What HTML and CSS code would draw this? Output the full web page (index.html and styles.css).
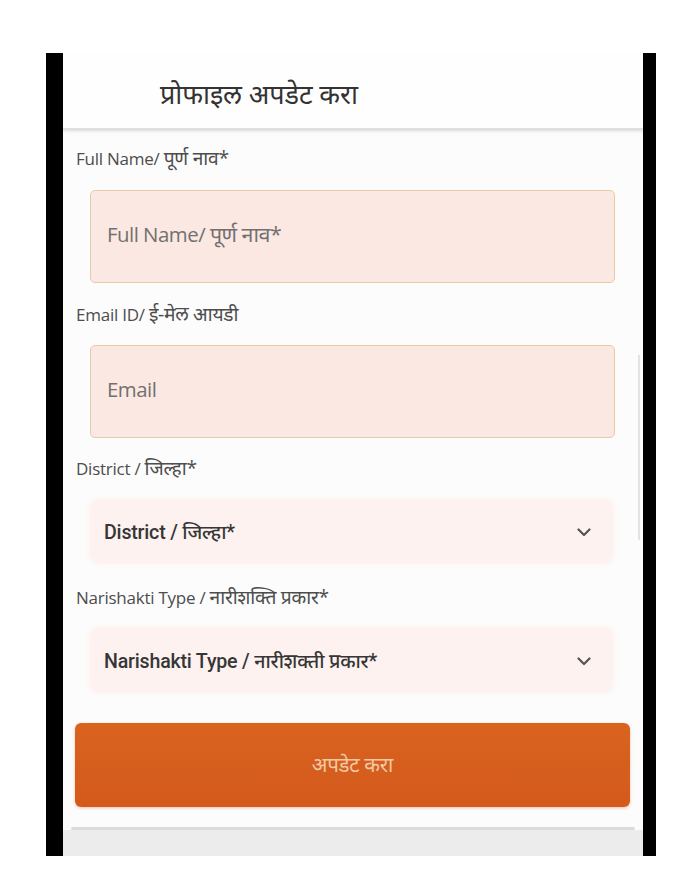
FILE: index.html
```html
<!DOCTYPE html>
<html lang="mr">
<head>
<meta charset="utf-8">
<title>प्रोफाइल अपडेट करा</title>
<link rel="stylesheet" href="styles.css">
</head>
<body>
<div class="frame">
  <div class="screen">
    <header class="topbar">
      <h1 class="title">प्रोफाइल अपडेट करा</h1>
    </header>
    <main class="form">
      <label class="label lbl-1">Full Name/ <span class="dev">पूर्ण नाव*</span></label>
      <div class="input input-1"><span class="placeholder">Full Name/ <span class="dev">पूर्ण नाव*</span></span></div>

      <label class="label lbl-2">Email ID/ <span class="dev">ई-मेल आयडी</span></label>
      <div class="input input-2"><span class="placeholder">Email</span></div>

      <label class="label lbl-3">District / <span class="dev">जिल्हा*</span></label>
      <div class="select select-1">
        <span class="select-text">District / जिल्हा*</span>
        <svg class="chev" width="14" height="9" viewBox="0 0 14 9"><polyline points="1.5,1.5 7,7 12.5,1.5" fill="none" stroke="#555" stroke-width="2.2" stroke-linecap="round" stroke-linejoin="round"/></svg>
      </div>

      <label class="label lbl-4">Narishakti Type / <span class="dev">नारीशक्ति प्रकार*</span></label>
      <div class="select select-2">
        <span class="select-text">Narishakti Type / नारीशक्ती प्रकार*</span>
        <svg class="chev" width="14" height="9" viewBox="0 0 14 9"><polyline points="1.5,1.5 7,7 12.5,1.5" fill="none" stroke="#555" stroke-width="2.2" stroke-linecap="round" stroke-linejoin="round"/></svg>
      </div>

      <button class="btn" type="button">अपडेट करा</button>
    </main>
    <div class="bottom-divider"></div>
    <div class="bottom-area"></div>
    <div class="scroll-hint"></div>
  </div>
</div>
</body>
</html>
```

FILE: styles.css
```css
html, body {
  margin: 0;
  padding: 0;
  background: #ffffff;
}
body {
  width: 700px;
  height: 872px;
  font-family: "Open Sans", "Noto Sans", "Noto Sans Devanagari", sans-serif;
}
.frame {
  padding-top: 53px;
  padding-left: 46px;
}
.screen {
  position: relative;
  width: 580px;
  height: 803px;
  border-left: 17px solid #000;
  border-right: 13px solid #000;
  background: #fcfcfc;
  display: flex;
  flex-direction: column;
  overflow: hidden;
}
.topbar {
  height: 75px;
  background: #fefefe;
  box-shadow: 0 2px 3px rgba(0,0,0,0.14);
  border-bottom: 1px solid #e0e0e0;
  display: flex;
  align-items: center;
  padding-left: 97px;
  position: relative;
  z-index: 1;
}
.title {
  margin: 0;
  font-size: 27px;
  font-weight: 400;
  color: #333;
  letter-spacing: -0.1px;
  padding-top: 6px;
}
.form {
  display: flex;
  flex-direction: column;
  padding: 19px 0 0 0;
}
.label {
  display: block;
  height: 20px;
  line-height: 20px;
  margin-left: 13px;
  font-size: 17px;
  color: #4d4d4d;
  letter-spacing: -0.25px;
  white-space: nowrap;
}
.dev { font-size: 1.13em; }
.lbl-2 { margin-top: 21px; }
.lbl-3 { margin-top: 20px; }
.lbl-4 { margin-top: 24px; }
.input {
  margin: 22px 28px 0 27px;
  height: 93px;
  border: 1px solid #e6cba8;
  border-radius: 5px;
  background: #fbe8e2;
  display: flex;
  align-items: center;
  padding-left: 16px;
  padding-bottom: 6px;
  box-sizing: border-box;
}
.input-2 { margin-top: 21px; }
.placeholder {
  font-size: 20.4px;
  color: #727070;
  letter-spacing: -0.5px;
  white-space: nowrap;
}
.placeholder .dev { font-size: 1.05em; }
.select {
  margin: 22px 30px 0 27px;
  height: 63px;
  border-radius: 9px;
  background: #fdf2ef;
  box-shadow: 0 0 4px 2px #fdf4f1;
  display: flex;
  align-items: center;
  justify-content: space-between;
  padding: 0 22px 0 14px;
  box-sizing: border-box;
}
.select-2 { margin-top: 21px; height: 64px; }
.select-text {
  font-family: Roboto, "Noto Sans", "Noto Sans Devanagari", sans-serif;
  font-weight: 500;
  font-size: 19.6px;
  color: #363636;
  letter-spacing: -0.2px;
  white-space: nowrap;
}
.chev { display: block; margin-top: 2px; }
.btn {
  margin: 31px 13px 0 12px;
  height: 84px;
  border: none;
  border-radius: 6px;
  background: linear-gradient(#d9631f, #d45a1c);
  box-shadow: 0 1px 3px rgba(230,120,60,0.45);
  color: #f2c9a6;
  font-family: "Open Sans", "Noto Sans", "Noto Sans Devanagari", sans-serif;
  font-size: 20.5px;
  letter-spacing: -0.3px;
  padding-bottom: 4px;
}
.bottom-divider {
  margin: 20px 8px 0 8px;
  height: 3px;
  background: #dcdcdc;
  border-radius: 2px;
}
.bottom-area {
  flex: 1;
  background: #ececec;
}
.scroll-hint {
  position: absolute;
  right: 3px;
  top: 302px;
  width: 2px;
  height: 185px;
  background: #e3e3e3;
}
```
